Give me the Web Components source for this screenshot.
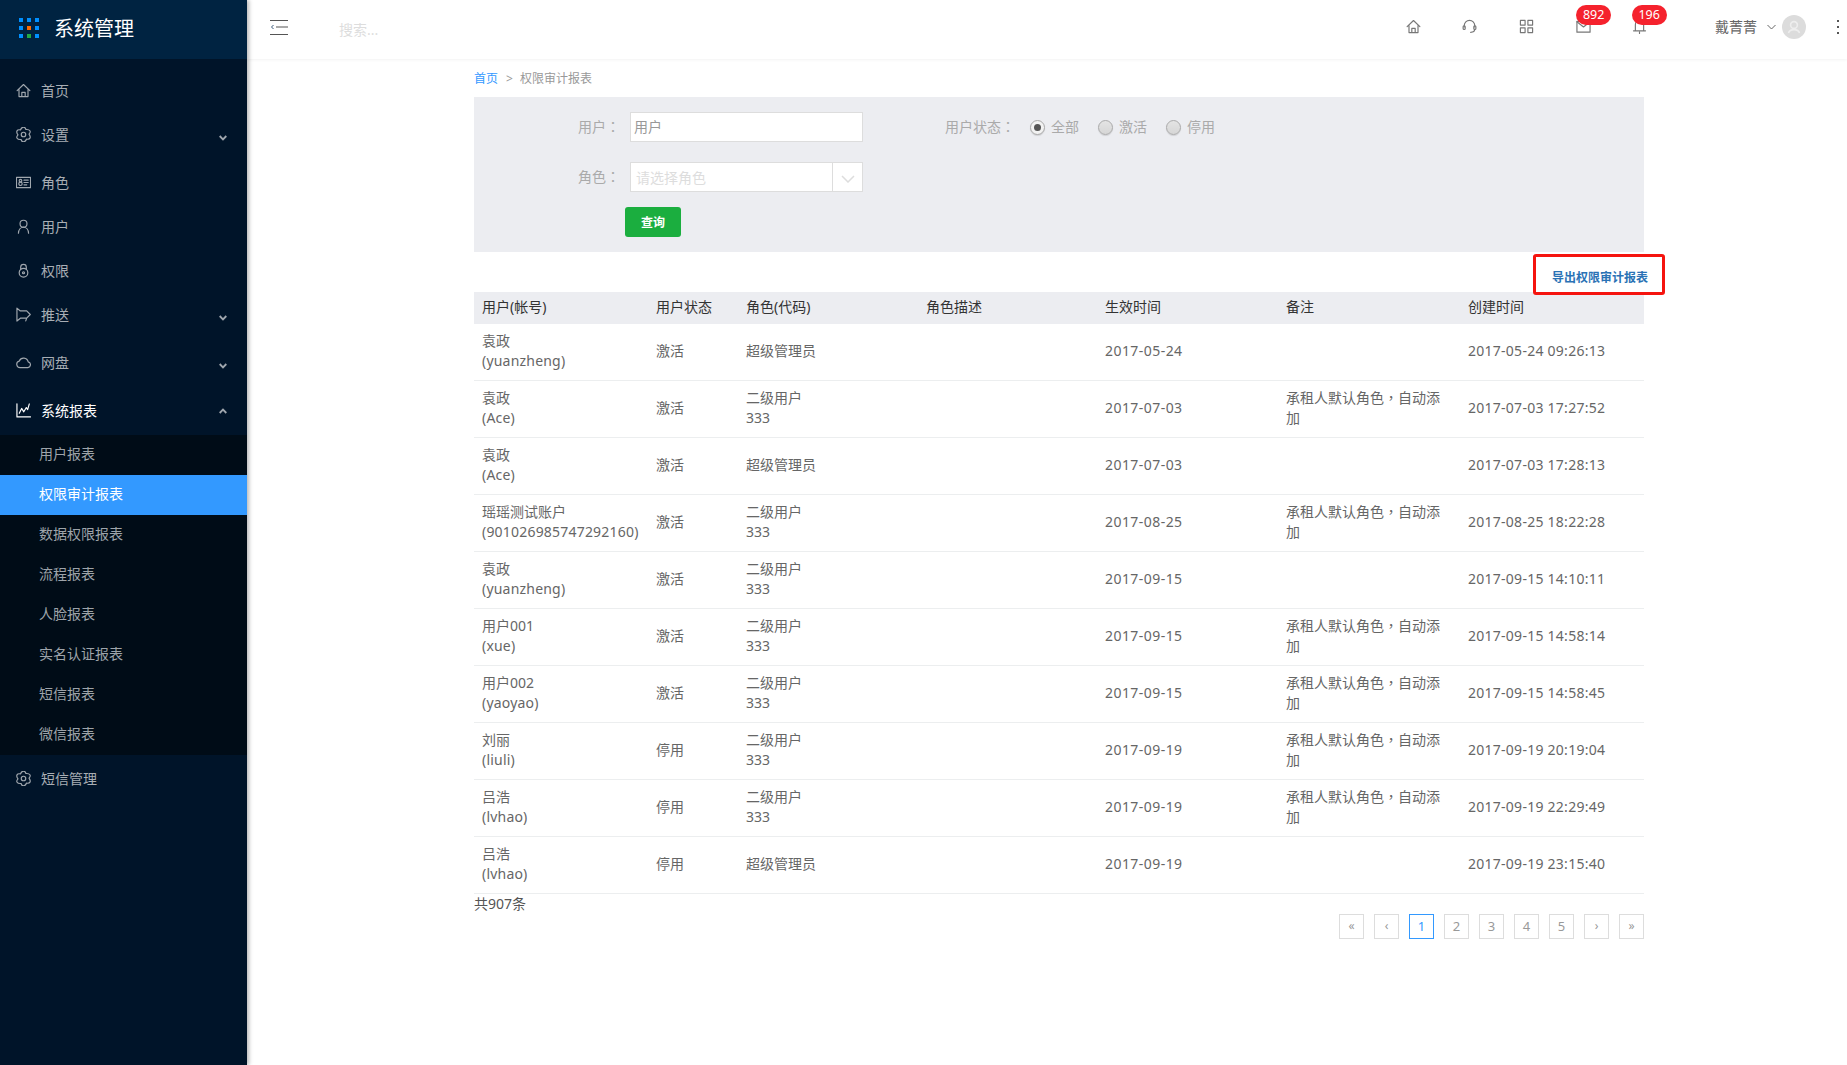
<!DOCTYPE html>
<html lang="zh-CN">
<head>
<meta charset="utf-8">
<title>权限审计报表</title>
<style>
html,body{margin:0;padding:0;height:100%;background:#fff;}
body{font:14px/20px "Noto Sans","Noto Sans CJK SC",sans-serif;color:#666;overflow:hidden;}
audit-app{height:1065px;}
</style>
</head>
<body>
<audit-app>
  <app-sidebar slot="sidebar">
    <nav-item icon="home">首页</nav-item>
    <nav-item icon="gear" chevron="down" extra>设置</nav-item>
    <nav-item icon="card">角色</nav-item>
    <nav-item icon="user">用户</nav-item>
    <nav-item icon="lock">权限</nav-item>
    <nav-item icon="push" chevron="down" extra>推送</nav-item>
    <nav-item icon="cloud" chevron="down" extra>网盘</nav-item>
    <nav-item icon="chart" chevron="up" open>系统报表</nav-item>
    <nav-group>
      <nav-sub>用户报表</nav-sub>
      <nav-sub active>权限审计报表</nav-sub>
      <nav-sub>数据权限报表</nav-sub>
      <nav-sub>流程报表</nav-sub>
      <nav-sub>人脸报表</nav-sub>
      <nav-sub>实名认证报表</nav-sub>
      <nav-sub>短信报表</nav-sub>
      <nav-sub>微信报表</nav-sub>
    </nav-group>
    <nav-item icon="gear">短信管理</nav-item>
  </app-sidebar>
  <top-bar slot="top"></top-bar>
  <page-crumb></page-crumb>
  <filter-panel></filter-panel>
  <export-bar>导出权限审计报表</export-bar>
  <audit-table></audit-table>
  <table-foot></table-foot>
</audit-app>
<script>
const STROKE='fill="none" stroke="currentColor" stroke-width="1.25" stroke-linecap="round" stroke-linejoin="round"';
function gearPath(){
  let d='';
  const p=(r,a)=>[(8+r*Math.cos(a*Math.PI/180)).toFixed(2),(8+r*Math.sin(a*Math.PI/180)).toFixed(2)];
  for(let k=0;k<6;k++){
    const a=60*k;
    const s=p(5.9,a-4), c1=p(9,a+20), c2=p(9,a+40), e=p(5.9,a+60-4);
    d+=(k===0?'M'+s.join(' '):'')+' C'+c1.join(' ')+' '+c2.join(' ')+' '+e.join(' ');
  }
  return d+'Z';
}
const ICONS={
  home:'<path d="M1.2 8.2 8 1.6l6.8 6.6M3.2 7v7.5h9.6V7M6.2 14.5V10h3.6v4.5"/>',
  gear:'<path d="'+gearPath()+'"/><circle cx="8" cy="8" r="2.4"/>',
  card:'<rect x=".5" y="2.5" width="15" height="11"/><circle cx="4.8" cy="6" r="1.4"/><circle cx="4.8" cy="9.4" r="1.8"/><path d="M8.500 5.500h4.500M8.500 8h4.500M8.500 10.500h3"/>',
  user:'<circle cx="8" cy="5" r="3.7"/><path d="M2.6 15.2c.2-3.6 2.4-6.400 5.400-6.400s5.200 2.800 5.400 6.400"/>',
  lock:'<path d="M5 6.600V4.400a3 3 0 0 1 6 0v2.200"/><circle cx="8" cy="10.400" r="4.600"/><circle cx="8" cy="10.400" r="1.100"/>',
  push:'<path d="M1 1.200v13.800l4-3.200h6.400l3.800-3.800-3.800-3.800H4.600zM1 1.200 4.600 4.200M11.400 11.800l-1 3"/>',
  cloud:'<path d="M4.400 13.400a3.500 3.500 0 0 1-.9-6.900 5 5 0 0 1 9.500.8 3.100 3.100 0 0 1-.3 6.100z"/>',
  chart:'<path d="M1 .8v14h14.500M3.500 11l2.500-5.200 2.300 3.600L11 4.800l1.400 2.200L14.200 1"/>',
  headset:'<path d="M2.400 8.500V7a5.600 5.600 0 0 1 11.200 0v1.500M13.600 11c0 2.200-2 3.200-4.400 3.200"/><rect x="1.200" y="7.200" width="2.200" height="4" rx="1"/><rect x="12.600" y="7.200" width="2.200" height="4" rx="1"/>',
  grid:'<rect x="1.500" y="1.500" width="5" height="5"/><rect x="9.500" y="1.500" width="5" height="5"/><rect x="1.500" y="9.500" width="5" height="5"/><rect x="9.500" y="9.500" width="5" height="5"/>',
  mail:'<rect x="1" y="2.500" width="14" height="11.500"/><path d="M1 3l7 5.500L15 3"/>',
  bell:'<path d="M3.600 12.600V6a4.400 4.400 0 0 1 8.800 0v6.600M1.600 12.600h12.800M8 14v1.400"/>'
};
function svg(name,size){return `<svg width="${size}" height="${size}" viewBox="0 0 16 16" ${STROKE}>${ICONS[name]}</svg>`;}

class Base extends HTMLElement{
  constructor(){super();this.attachShadow({mode:'open'});}
}
customElements.define('audit-app',class extends Base{
  constructor(){super();this.shadowRoot.innerHTML=`<style>
    :host{display:flex;width:100%;align-items:stretch}
    .main{flex:1;min-width:0;display:flex;flex-direction:column}
    .content{width:1170px;margin-left:227px;display:flex;flex-direction:column}
  </style>
  <slot name="sidebar"></slot>
  <div class="main"><slot name="top"></slot><div class="content"><slot></slot></div></div>`;}
});
customElements.define('app-sidebar',class extends Base{
  constructor(){super();this.shadowRoot.innerHTML=`<style>
    :host{display:flex;flex-direction:column;flex:none;width:247px;background:#001429;box-shadow:2px 0 4px rgba(0,0,0,.28);position:relative;z-index:3}
    .brand{height:59px;background:#002341;display:flex;align-items:center;padding-left:19px;flex:none}
    .dots{display:grid;grid-template-columns:repeat(3,4px);grid-auto-rows:4px;gap:4px;margin-right:15px;position:relative;top:-2px}
    .dots i{background:#0090ff}
    .dots i.o{background:#ff6a00}.dots i.g{background:#22aa44}
    .name{font-size:20px;line-height:28px;color:#fff;font-weight:400;position:relative;top:-1px}
    .list{padding-top:10px;display:flex;flex-direction:column}
  </style>
  <div class="brand"><div class="dots"><i></i><i></i><i></i><i></i><i class="o"></i><i></i><i></i><i class="g"></i><i></i></div><span class="name">系统管理</span></div>
  <div class="list"><slot></slot></div>`;}
});
customElements.define('nav-item',class extends Base{
  connectedCallback(){
    const ic=this.getAttribute('icon'),ch=this.getAttribute('chevron');
    const chev=ch?`<svg class="chev ${ch}" width="8" height="6" viewBox="0 0 8 6" fill="none" stroke="currentColor" stroke-width="1.8"><path d="${ch==='down'?'M.7 1 4 4.400 7.300 1':'M.7 5 4 1.600 7.300 5'}"/></svg>`:'';
    this.shadowRoot.innerHTML=`<style>
      :host{display:flex;align-items:center;height:44px;box-sizing:border-box;padding:0 20px 1px 16px;color:#a8aeb4;font-size:14px;flex:none}
      :host([extra]){margin-bottom:4px}
      :host([open]){color:#fff;margin-bottom:2px}
      .ic{width:15px;height:15px;margin-right:10px;display:flex;color:#a0a7ae}
      :host([open]) .ic{color:#fff}
      svg{display:block}
      .t{flex:1}
      .chev{color:#a0a7ae}
      .chev.down{position:relative;top:3px}
    </style><span class="ic">${svg(ic,15)}</span><span class="t"><slot></slot></span>${chev}`;
  }
});
customElements.define('nav-group',class extends Base{
  constructor(){super();this.shadowRoot.innerHTML=`<style>:host{display:flex;flex-direction:column;background:#000c17;margin-bottom:2px}</style><slot></slot>`;}
});
customElements.define('nav-sub',class extends Base{
  constructor(){super();this.shadowRoot.innerHTML=`<style>
    :host{display:flex;align-items:center;height:40px;box-sizing:border-box;padding:0 0 2px 39px;color:#9ea4aa;font-size:14px}
    :host([active]){background:#39f;color:#fff}
  </style><slot></slot>`;}
});
customElements.define('top-bar',class extends Base{
  constructor(){super();
    const tool=(n,b)=>`<div class="tool"><span class="i">${svg(n,15)}</span>${b?`<b>${b}</b>`:''}</div>`;
    this.shadowRoot.innerHTML=`<style>
    :host{display:flex;align-items:center;height:59px;flex:none;background:#fff;box-shadow:0 1px 3px rgba(0,0,0,.05);position:relative;z-index:2;padding-left:23px;padding-right:8px;color:#666}
    .burger{width:18px;height:15px;display:block;margin-top:-5px;color:#555;flex:none}
    .search{margin-left:51px;color:#ddd;font-size:14px;margin-top:1px}
    .tools{margin-left:auto;display:flex;align-items:center}
    .tool{width:56.6px;height:59px;display:flex;align-items:center;justify-content:center;position:relative;color:#777}
    .i{display:flex;margin-top:-7px}
    .tool b{position:absolute;left:50%;margin-left:-7px;top:5px;min-width:35px;height:20px;box-sizing:border-box;background:#f5222d;color:#fff;font:400 12.5px/20px "Noto Sans",sans-serif;border-radius:10px;text-align:center}
    .tool:last-child b{margin-left:-8px}
    .user{margin-left:47px;color:#666;font-size:14px;margin-top:-5px}
    .arrow{margin:-5px 0 0 10px;color:#666;display:block}
    .avatar{margin:-5px 0 0 6px;width:24px;height:24px;border-radius:50%;background:#dcdcdc;display:flex;align-items:center;justify-content:center;color:#eee}
    .more{margin:-5px 0 0 31px;display:grid;gap:4px;width:2px}
    .more i{width:2px;height:2px;background:#555}
    </style>
    <svg class="burger" viewBox="0 0 18 15" fill="none" stroke="currentColor"><path d="M0 .5h18M6 7h12M0 14.500h18"/><path d="M3.500 5 1.500 7l2 2" stroke="#3b5a7a"/></svg>
    <span class="search">搜索...</span>
    <div class="tools">${tool('home')}${tool('headset')}${tool('grid')}${tool('mail','892')}${tool('bell','196')}</div>
    <span class="user">戴菁菁</span>
    <svg class="arrow" width="9" height="6" viewBox="0 0 9 6" fill="none" stroke="currentColor"><path d="M.5 1 4.500 5 8.500 1"/></svg>
    <span class="avatar"><svg width="16" height="16" viewBox="0 0 16 16" fill="none" stroke="currentColor" stroke-width="1.6"><circle cx="8" cy="6" r="3.400"/><path d="M2.500 14c.8-2.600 3-3.400 5.500-3.400s4.700.8 5.500 3.400"/></svg></span>
    <span class="more"><i></i><i></i><i></i></span>`;}
});
customElements.define('page-crumb',class extends Base{
  constructor(){super();this.shadowRoot.innerHTML=`<style>
    :host{display:flex;align-items:center;height:38px;box-sizing:border-box;padding-top:2px;font-size:12px;color:#999;flex:none}
    .home{color:#39f}.sep{margin:0 7px 0 8px;color:#999}
  </style><span class="home">首页</span><span class="sep">&gt;</span><span>权限审计报表</span>`;}
});
customElements.define('radio-opt',class extends Base{
  constructor(){super();this.shadowRoot.innerHTML=`<style>
    :host{display:inline-flex;align-items:center;color:#aaa;font-size:14px;width:68px}
    .r{width:15px;height:15px;box-sizing:border-box;border-radius:50%;border:1px solid #aaa;background:linear-gradient(#e4e4e4,#d6d6d6);margin-right:6.5px;display:flex;align-items:center;justify-content:center;flex:none;box-shadow:0 1px 1px rgba(0,0,0,.12)}
    :host([checked]) .r{background:#f2f2f2}
    :host([checked]) .r::after{content:"";width:7px;height:7px;border-radius:50%;background:#555}
  </style><span class="r"></span><slot></slot>`;}
});
customElements.define('filter-panel',class extends Base{
  constructor(){super();this.shadowRoot.innerHTML=`<style>
    :host{display:flex;flex-direction:column;height:155px;box-sizing:border-box;background:#ecedf1;padding:15px 0 0 104px;font-size:14px;flex:none}
    .row{display:flex;align-items:center;height:30px;margin-bottom:20px}
    .lab{width:52px;color:#aaa;flex:none;white-space:nowrap;font-family:"Noto Sans CJK TC",sans-serif;margin-top:-2px}
    .box{width:233px;height:30px;box-sizing:border-box;border:1px solid #ddd;background:#fff;display:flex;align-items:center;flex:none}
    .val{padding-left:3px;color:#999}
    .ph{padding:1px 0 0 5px;color:#ddd;flex:1}
    .dd{width:29px;height:28px;border-left:1px solid #ddd;display:flex;align-items:center;justify-content:center;color:#ddd}
    .dd svg{margin-top:3px}
    .lab2{margin-left:82px;width:84.5px;color:#aaa;flex:none;font-family:"Noto Sans CJK TC",sans-serif;margin-top:-2px}
    .btn{margin:-5px 0 0 47px;width:56px;height:30px;box-sizing:border-box;padding-top:1px;border-radius:3px;background:#1bae3f;color:#fff;font-size:12px;font-weight:700;display:flex;align-items:center;justify-content:center}
  </style>
  <div class="row"><span class="lab" lang="zh-TW">用户：</span><div class="box"><span class="val">用户</span></div>
    <span class="lab2" lang="zh-TW">用户状态：</span><radio-opt checked>全部</radio-opt><radio-opt>激活</radio-opt><radio-opt>停用</radio-opt></div>
  <div class="row"><span class="lab" lang="zh-TW">角色：</span><div class="box"><span class="ph">请选择角色</span><span class="dd"><svg width="14" height="8" viewBox="0 0 14 8" fill="none" stroke="currentColor" stroke-width="1.5"><path d="M1 1l6 6 6-6"/></svg></span></div></div>
  <div class="btn">查询</div>`;}
});
customElements.define('export-bar',class extends Base{
  constructor(){super();this.shadowRoot.innerHTML=`<style>
    :host{display:flex;justify-content:flex-end;height:40px;flex:none;position:relative;z-index:1}
    .box{width:132px;height:41px;box-sizing:border-box;margin:2px -21px 0 0;border:3px solid #f5140f;border-radius:3px;padding:11px 0 0 16px;font-size:12px;line-height:20px;font-weight:700;color:#2a72b5;white-space:nowrap}
  </style><div class="box"><slot></slot></div>`;}
});
customElements.define('audit-table',class extends Base{
  constructor(){super();
    const A='承租人默认角色，自动添加';
    const rows=[
      ['袁政','yuanzheng','激活','超级管理员','','2017-05-24','','2017-05-24 09:26:13'],
      ['袁政','Ace','激活','二级用户','333','2017-07-03',A,'2017-07-03 17:27:52'],
      ['袁政','Ace','激活','超级管理员','','2017-07-03','','2017-07-03 17:28:13'],
      ['瑶瑶测试账户','901026985747292160','激活','二级用户','333','2017-08-25',A,'2017-08-25 18:22:28'],
      ['袁政','yuanzheng','激活','二级用户','333','2017-09-15','','2017-09-15 14:10:11'],
      ['用户001','xue','激活','二级用户','333','2017-09-15',A,'2017-09-15 14:58:14'],
      ['用户002','yaoyao','激活','二级用户','333','2017-09-15',A,'2017-09-15 14:58:45'],
      ['刘丽','liuli','停用','二级用户','333','2017-09-19',A,'2017-09-19 20:19:04'],
      ['吕浩','lvhao','停用','二级用户','333','2017-09-19',A,'2017-09-19 22:29:49'],
      ['吕浩','lvhao','停用','超级管理员','','2017-09-19','','2017-09-19 23:15:40']
    ];
    const body=rows.map(r=>`<tr><td>${r[0]}<br><span class="id">(${r[1]})</span></td><td>${r[2]}</td><td>${r[3]}${r[4]?'<br>'+r[4]:''}</td><td></td><td class="d">${r[5]}</td><td class="n" lang="zh-TW">${r[6]}</td><td class="s">${r[7]}</td></tr>`).join('');
    this.shadowRoot.innerHTML=`<style>
    :host{display:block;flex:none}
    table{width:1170px;table-layout:fixed;border-collapse:separate;border-spacing:0;font-size:14px;line-height:20px;color:#666}
    th{height:32px;box-sizing:border-box;padding:0 8px 2px;text-align:left;font-weight:400;color:#333;background:#ecedf1}
    td{height:57px;box-sizing:border-box;padding:7px 8px 9px;border-bottom:1px solid #eceeef;vertical-align:middle;word-break:break-all}
    td.n{font-family:"Noto Sans CJK TC",sans-serif;padding:6px 8px 10px}
    .id{letter-spacing:.2px}
    .d{letter-spacing:.45px}
    .s{letter-spacing:.26px}
    </style>
    <table><colgroup><col style="width:174px"><col style="width:90px"><col style="width:180px"><col style="width:179px"><col style="width:181px"><col style="width:182px"><col style="width:184px"></colgroup>
    <thead><tr><th>用户(帐号)</th><th>用户状态</th><th>角色(代码)</th><th>角色描述</th><th>生效时间</th><th>备注</th><th>创建时间</th></tr></thead>
    <tbody>${body}</tbody></table>`;}
});
customElements.define('table-foot',class extends Base{
  constructor(){super();
    const p=['«','‹','1','2','3','4','5','›','»'];
    this.shadowRoot.innerHTML=`<style>
    :host{display:flex;justify-content:space-between;align-items:flex-start;flex:none}
    .total{font-size:14px;line-height:20px;color:#555}
    .pager{display:flex;gap:10px;margin-top:20px}
    .pager span{width:25px;height:25px;box-sizing:border-box;border:1px solid #ddd;color:#999;font-size:12px;line-height:22px;text-align:center}
    .pager span.n{font-size:13px}
    .pager span.on{border-color:#39f;color:#39f}
    </style>
    <span class="total">共907条</span>
    <div class="pager">${p.map(x=>`<span class="${/\d/.test(x)?'n':''}${x==='1'?' on':''}">${x}</span>`).join('')}</div>`;}
});
</script>
</body>
</html>
